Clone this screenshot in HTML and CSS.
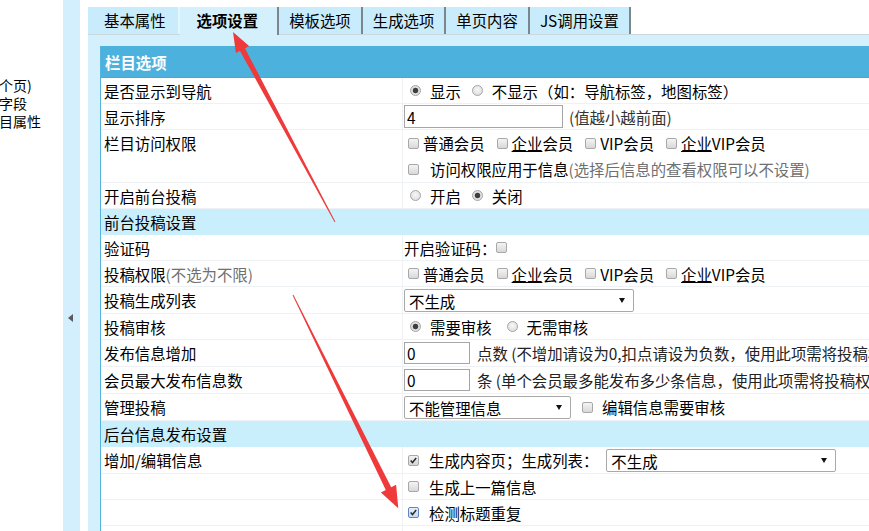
FILE: index.html
```html
<!DOCTYPE html>
<html lang="zh-CN">
<head>
<meta charset="utf-8">
<title>栏目设置</title>
<link rel="stylesheet" href="styles.css">
</head>
<body>
<div class="page">
  <aside class="tree">
    <div class="tree-line">单个页)</div>
    <div class="tree-line">义字段</div>
    <div class="tree-line">栏目属性</div>
  </aside>
  <div class="toggle"><span class="tri"></span></div>
  <main class="main">
    <nav class="tabs">
      <span class="tab first">基本属性</span>
      <span class="tab active">选项设置</span>
      <span class="tab">模板选项</span>
      <span class="tab">生成选项</span>
      <span class="tab">单页内容</span>
      <span class="tab">JS调用设置</span>
    </nav>
    <section class="panel">
      <div class="form">
        <div class="head">栏目选项</div>

        <div class="row">
          <div class="lab">是否显示到导航</div>
          <div class="val">
            <span class="opt"><span class="rb on"></span>显示</span>
            <span class="opt"><span class="rb"></span>不显示<span class="fw">（如：导航标签，地图标签）</span></span>
          </div>
        </div>

        <div class="row">
          <div class="lab">显示排序</div>
          <div class="val"><input class="txt wide" type="text" value="4"><span class="after">(值越小越前面)</span></div>
        </div>

        <div class="row double">
          <div class="lab top">栏目访问权限</div>
          <div class="val col">
            <div class="line">
              <span class="copt"><span class="cb"></span>普通会员</span>
              <span class="copt"><span class="cb"></span><u>企业</u>会员</span>
              <span class="copt"><span class="cb"></span>VIP会员</span>
              <span class="copt"><span class="cb"></span><u>企业</u>VIP会员</span>
            </div>
            <div class="line"><span class="cb wide-gap"></span>访问权限应用于信息<span class="gray">(选择后信息的查看权限可以不设置)</span></div>
          </div>
        </div>

        <div class="row">
          <div class="lab">开启前台投稿</div>
          <div class="val">
            <span class="opt"><span class="rb"></span>开启</span>
            <span class="opt"><span class="rb on"></span>关闭</span>
          </div>
        </div>

        <div class="sec">前台投稿设置</div>

        <div class="row">
          <div class="lab">验证码</div>
          <div class="val">开启验证码：<span class="cb flush"></span></div>
        </div>

        <div class="row">
          <div class="lab">投稿权限<span class="gray">(不选为不限)</span></div>
          <div class="val">
            <span class="copt"><span class="cb"></span>普通会员</span>
            <span class="copt"><span class="cb"></span><u>企业</u>会员</span>
            <span class="copt"><span class="cb"></span>VIP会员</span>
            <span class="copt"><span class="cb"></span><u>企业</u>VIP会员</span>
          </div>
        </div>

        <div class="row r27">
          <div class="lab">投稿生成列表</div>
          <div class="val"><span class="select w230"><select><option>不生成</option></select></span></div>
        </div>

        <div class="row">
          <div class="lab">投稿审核</div>
          <div class="val">
            <span class="opt roomy"><span class="rb on"></span>需要审核</span>
            <span class="opt"><span class="rb"></span>无需审核</span>
          </div>
        </div>

        <div class="row r27">
          <div class="lab">发布信息增加</div>
          <div class="val"><input class="txt short" type="text" value="0"><span class="after2">点数 (不增加请设为0,扣点请设为负数<span class="fw">，</span>使用此项需将投稿权限设置为会员)</span></div>
        </div>

        <div class="row r27">
          <div class="lab">会员最大发布信息数</div>
          <div class="val"><input class="txt short" type="text" value="0"><span class="after2">条 (单个会员最多能发布多少条信息<span class="fw">，</span>使用此项需将投稿权限设置为会员)</span></div>
        </div>

        <div class="row r27">
          <div class="lab">管理投稿</div>
          <div class="val"><span class="select w167"><select><option>不能管理信息</option></select></span><span class="cb apart"></span>编辑信息需要审核</div>
        </div>

        <div class="sec">后台信息发布设置</div>

        <div class="row r27">
          <div class="lab">增加/编辑信息</div>
          <div class="val"><span class="cb on wide-gap2"><svg viewBox="0 0 11 11" width="9" height="9"><path d="M2 5.6 L4.3 8 L8.8 2.4" fill="none" stroke="#2b2b2b" stroke-width="1.8"/></svg></span>生成内容页<span class="fw">；</span>生成列表<span class="fw">：</span><span class="select w230 sel-gap"><select><option>不生成</option></select></span></div>
        </div>

        <div class="row">
          <div class="lab"></div>
          <div class="val"><span class="cb wide-gap2"></span>生成上一篇信息</div>
        </div>

        <div class="row">
          <div class="lab"></div>
          <div class="val"><span class="cb on focus wide-gap2"><svg viewBox="0 0 11 11" width="9" height="9"><path d="M2 5.6 L4.3 8 L8.8 2.4" fill="none" stroke="#2b2b2b" stroke-width="1.8"/></svg></span>检测标题重复</div>
        </div>

        <div class="row">
          <div class="lab"></div>
          <div class="val"></div>
        </div>
      </div>
    </section>
  </main>

  <svg class="arrows" width="869" height="531" viewBox="0 0 869 531" aria-hidden="true">
    <polygon fill="#ef3a3b" points="335.4,221.8 245.0,48.3 249.1,46.1 233,32 235.9,53.1 240.0,50.9 334.6,222.2"/>
    <polygon fill="#ef3a3b" points="293.4,294.8 391.2,487.3 396.1,484.8 398.3,508.3 380.9,492.4 385.8,489.9 292.6,295.2"/>
  </svg>
</div>
</body>
</html>
```

FILE: styles.css
```css
html, body {
  margin: 0;
  padding: 0;
  background: #fff;
}

body {
  font-family: "Noto Sans CJK SC", "Noto Sans", "Liberation Sans", sans-serif;
  font-size: 15.4px;
  color: #000;
  overflow: hidden;
}

.page {
  position: relative;
  display: flex;
  height: 531px;
  overflow: hidden;
}

/* full-width CJK punctuation */
.fw {
  font-family: "Noto Sans CJK SC", sans-serif;
  font-variant-east-asian: full-width;
  font-feature-settings: "fwid" 1, "halt" 0, "palt" 0, "chws" 0;
  text-spacing-trim: space-all;
}

/* left tree frame (clipped) */
.tree {
  flex: none;
  width: 63px;
  box-sizing: border-box;
  padding-top: 76px;
  overflow: hidden;
  font-size: 14px;
  white-space: nowrap;
}

.tree-line {
  height: 18px;
  line-height: 18px;
  overflow: hidden;
  text-indent: -15px;
}

/* collapse toggle strip */
.toggle {
  flex: none;
  width: 17px;
  box-sizing: border-box;
  padding-top: 314px;
  background: #d3eefc;
}

.tri {
  display: block;
  width: 0;
  height: 0;
  margin-left: 5px;
  border-top: 4px solid transparent;
  border-bottom: 4px solid transparent;
  border-right: 5px solid #5a5a5a;
}

/* main area */
.main {
  flex: 1;
  min-width: 0;
  margin-left: 8px;
  padding-top: 7px;
  overflow: hidden;
}

.tabs {
  display: flex;
  height: 27px;
  position: relative;
  z-index: 1;
}

.tab {
  flex: none;
  height: 27px;
  line-height: 27px;
  padding: 0 10px;
  background: #c8ecfb;
  border-right: 2px solid #7b878d;
  white-space: nowrap;
}

.tab.first {
  padding: 0 12px 0 16px;
  border-right: 2px solid #e4f6fd;
}

.tab.active {
  height: 28px;
  padding: 0 19px 0 17px;
  font-weight: bold;
  background: #d3f0fc;
}

.panel {
  height: 520px;
  box-sizing: border-box;
  padding: 11px 0 0 12px;
  background: #d3f0fc;
  border-top: 1px solid #c9d7de;
}

.form {
  width: 1000px;
  background: #fff;
  border-left: 1px solid #55b3dd;
}

.head {
  height: 32px;
  display: flex;
  align-items: center;
  padding-left: 4px;
  background: #4db1dd;
  border-bottom: 1px solid #49a9d3;
  box-sizing: border-box;
  color: #fff;
  font-weight: bold;
}

.sec {
  height: 26px;
  display: flex;
  align-items: center;
  padding-left: 3px;
  background: #c9eefc;
  box-sizing: border-box;
}

.row {
  display: grid;
  grid-template-columns: 302px 1fr;
  height: 26px;
  box-sizing: border-box;
  border-bottom: 1px solid #eef2f4;
}

.row.r27 {
  height: 27px;
}

.row.double {
  height: 53px;
}

.lab {
  display: flex;
  align-items: center;
  padding-left: 3px;
  border-right: 1px solid #eef2f4;
  white-space: nowrap;
}

.lab.top {
  align-items: flex-start;
  padding-top: 2px;
}

.val {
  display: flex;
  align-items: center;
  padding-left: 1px;
  white-space: nowrap;
}

.val.col {
  flex-direction: column;
  align-items: stretch;
}

.line {
  flex: 1;
  display: flex;
  align-items: center;
}

.gray {
  color: #707070;
}

u {
  text-decoration: underline;
  text-underline-offset: 1px;
}

/* radio & checkbox look-alikes */
.opt {
  display: inline-flex;
  align-items: center;
  margin-right: 5px;
}

.opt.roomy {
  margin-right: 9px;
}

.rb {
  display: inline-block;
  flex: none;
  width: 11px;
  height: 11px;
  box-sizing: border-box;
  margin: 0 9px 0 6px;
  border: 1px solid #a4a4a4;
  border-radius: 50%;
  background: radial-gradient(circle at 50% 40%, #f7f7f7, #d9d9d9);
}

.rb.on {
  background: radial-gradient(circle, #3e3e3e 0 2.2px, #6a6a6a 2.6px, #e4e4e4 3.2px, #d6d6d6);
}

.copt {
  display: inline-flex;
  align-items: center;
  margin-right: 8px;
}

.cb {
  display: inline-flex;
  align-items: center;
  justify-content: center;
  flex: none;
  width: 11px;
  height: 11px;
  box-sizing: border-box;
  margin: 0 4px;
  border: 1px solid #a8a8a8;
  border-radius: 2px;
  background: linear-gradient(#f4f4f4, #d8d8d8);
}

.cb.wide-gap {
  margin-right: 11px;
}

.cb.wide-gap2 {
  margin-right: 10px;
}

.cb.flush {
  margin-left: 0;
}

.cb.apart {
  margin: 0 9px 0 11px;
}

.cb.on {
  background: linear-gradient(#f2f2f2, #d4d4d4);
}

.cb.focus {
  border-color: #5c86c8;
  background: linear-gradient(#e6eefa, #c9d9f2);
}

/* text inputs */
.txt {
  height: 23px;
  box-sizing: border-box;
  margin: 0;
  padding: 0 2px;
  border: 1px solid #a6a6a6;
  font: inherit;
  color: #000;
  background: #fff;
}

.txt.wide {
  width: 159px;
}

.txt.short {
  width: 66px;
  height: 22px;
}

.after {
  margin-left: 6px;
  color: #333;
}

.after2 {
  margin-left: 7px;
  color: #222;
}

/* selects */
.select {
  position: relative;
  display: inline-block;
  flex: none;
}

.select select {
  display: block;
  height: 23px;
  box-sizing: border-box;
  margin: 0;
  padding: 0 4px;
  border: 1px solid #a9a9a9;
  border-radius: 2px;
  background: #fff;
  font: inherit;
  color: #000;
  appearance: none;
  -webkit-appearance: none;
}

.select::after {
  content: "";
  position: absolute;
  right: 9px;
  top: 9px;
  border-left: 3px solid transparent;
  border-right: 3px solid transparent;
  border-top: 5px solid #111;
}

.select.w230 select {
  width: 230px;
}

.select.w167 select {
  width: 167px;
}

.select.sel-gap {
  margin-left: 8px;
}

/* annotation arrows drawn over the screenshot */
.arrows {
  position: absolute;
  left: 0;
  top: 0;
  pointer-events: none;
  z-index: 5;
}
```
